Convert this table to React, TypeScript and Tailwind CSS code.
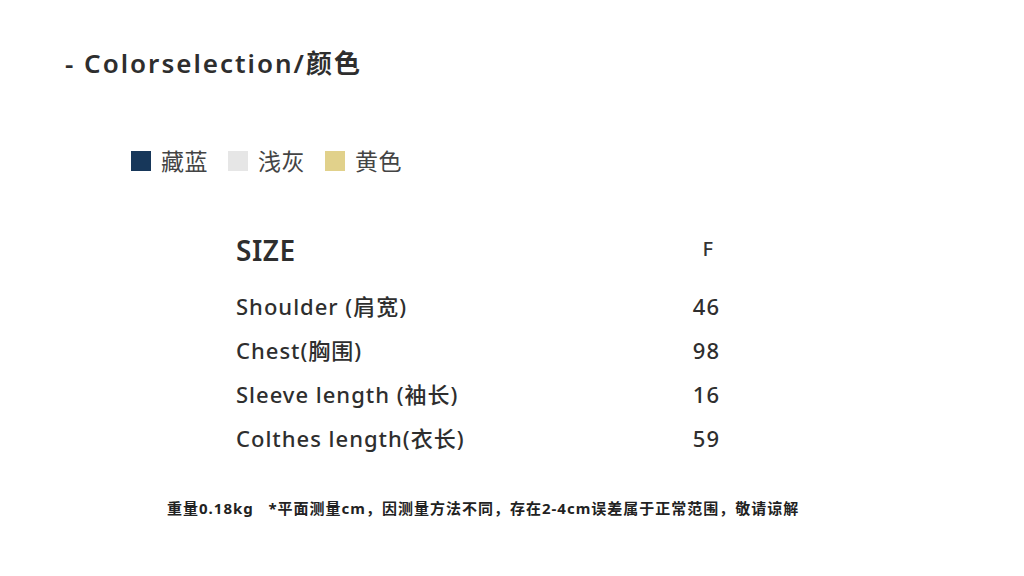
const font = { fontFamily: '"Noto Sans", "Noto Sans CJK SC", sans-serif' };

const rows = [
  { label: "Shoulder (肩宽)", value: "46" },
  { label: "Chest(胸围)", value: "98" },
  { label: "Sleeve length (袖长)", value: "16" },
  { label: "Colthes length(衣长)", value: "59" },
];

const colors = [
  { name: "藏蓝", swatch: "bg-[#17375a]" },
  { name: "浅灰", swatch: "bg-[#e6e6e6]" },
  { name: "黄色", swatch: "bg-[#e1d18b]" },
];

export default function App() {
  return (
    <div className="w-[1024px] h-[576px] bg-white text-[#333] overflow-hidden" style={font}>
      <h1 className="pl-[65px] pt-[44px] text-[26px] leading-[38px] font-semibold tracking-[2px] text-[#2e2e2e]">
        - Colorselection/颜色
      </h1>

      <div className="flex items-center gap-[20px] pl-[131px] mt-[64px]">
        {colors.map((c) => (
          <div key={c.name} className="flex items-center gap-[10px]">
            <span className={`w-[20px] h-[20px] ${c.swatch}`}></span>
            <span className="text-[23px] leading-[30px] tracking-[0.5px] text-[#444]">{c.name}</span>
          </div>
        ))}
      </div>

      <div className="ml-[236px] w-[484px] mt-[57px]">
        <div className="flex justify-between items-start">
          <span className="text-[28px] leading-[34px] font-semibold tracking-[0.5px] text-[#2e2e2e]">SIZE</span>
          <span className="text-[20px] leading-[28px] font-medium mr-[7px] mt-[2px]">F</span>
        </div>
        <div className="mt-[24px] flex flex-col gap-[14px]">
          {rows.map((r) => (
            <div key={r.label} className="flex justify-between items-center h-[30px]">
              <span className="text-[22px] leading-[30px] font-medium tracking-[1px] text-[#2e2e2e]">{r.label}</span>
              <span className="text-[22px] leading-[30px] font-medium tracking-[1px] text-[#2e2e2e]">{r.value}</span>
            </div>
          ))}
        </div>
      </div>

      <p className="pl-[167px] mt-[45px] text-[15px] leading-[20px] font-bold tracking-[1px] text-[#222] whitespace-pre">
        重量0.18kg   *平面测量cm，因测量方法不同，存在2-4cm误差属于正常范围，敬请谅解
      </p>
    </div>
  );
}
